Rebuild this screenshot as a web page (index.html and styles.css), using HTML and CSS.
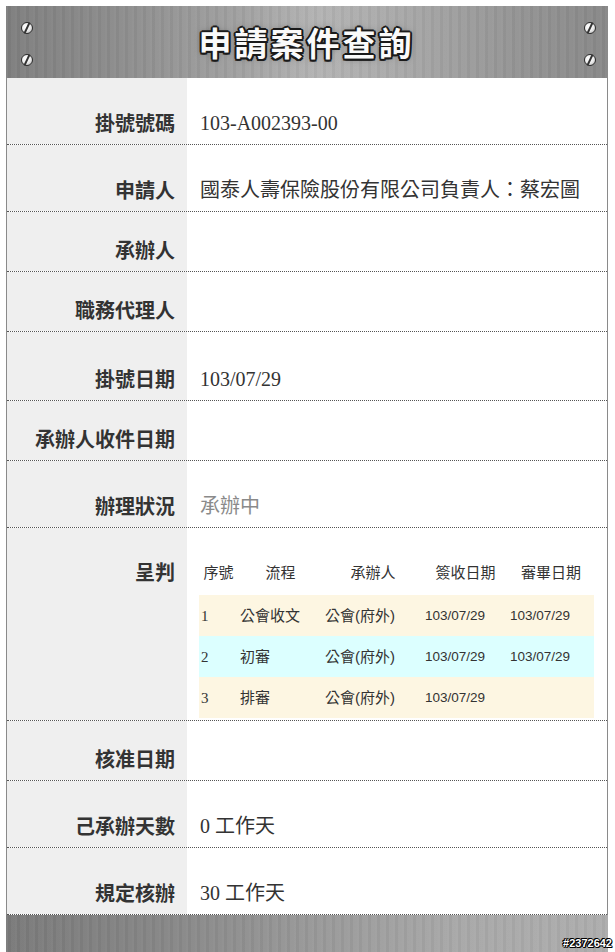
FILE: index.html
```html
<!DOCTYPE html>
<html lang="zh-Hant">
<head>
    <meta charset="UTF-8">
    <meta name="viewport" content="width=device-width, initial-scale=1.0">
    <title>申請案件查詢</title>
    <link rel="stylesheet" href="styles.css">
</head>
<body>
    <div class="panel">
        <div class="banner">
            <div class="screws"><span class="screw"></span><span class="screw"></span></div>
            <h1>申請案件查詢</h1>
            <div class="screws"><span class="screw"></span><span class="screw"></span></div>
        </div>

        <div class="rows">
            <div class="row">
                <div class="label">掛號號碼</div>
                <div class="value">103-A002393-00</div>
            </div>
            <div class="row">
                <div class="label">申請人</div>
                <div class="value">國泰人壽保險股份有限公司負責人：蔡宏圖</div>
            </div>
            <div class="row">
                <div class="label">承辦人</div>
                <div class="value"></div>
            </div>
            <div class="row">
                <div class="label">職務代理人</div>
                <div class="value"></div>
            </div>
            <div class="row">
                <div class="label">掛號日期</div>
                <div class="value value-date">103/07/29</div>
            </div>
            <div class="row">
                <div class="label">承辦人收件日期</div>
                <div class="value"></div>
            </div>
            <div class="row">
                <div class="label">辦理狀況</div>
                <div class="value muted">承辦中</div>
            </div>
            <div class="row row-top">
                <div class="label">呈判</div>
                <div class="value value-table">
                    <table class="flow">
                        <colgroup>
                            <col style="width:39px">
                            <col style="width:85px">
                            <col style="width:100px">
                            <col style="width:85px">
                            <col style="width:86px">
                        </colgroup>
                        <thead>
                            <tr><th>序號</th><th>流程</th><th>承辦人</th><th>簽收日期</th><th>審畢日期</th></tr>
                        </thead>
                        <tbody>
                            <tr class="odd"><td class="num">1</td><td>公會收文</td><td>公會(府外)</td><td class="date">103/07/29</td><td class="date">103/07/29</td></tr>
                            <tr class="even"><td class="num">2</td><td>初審</td><td>公會(府外)</td><td class="date">103/07/29</td><td class="date">103/07/29</td></tr>
                            <tr class="odd"><td class="num">3</td><td>排審</td><td>公會(府外)</td><td class="date">103/07/29</td><td class="date"></td></tr>
                        </tbody>
                    </table>
                </div>
            </div>
            <div class="row">
                <div class="label">核准日期</div>
                <div class="value"></div>
            </div>
            <div class="row">
                <div class="label">己承辦天數</div>
                <div class="value">0 工作天</div>
            </div>
            <div class="row">
                <div class="label">規定核辦</div>
                <div class="value">30 工作天</div>
            </div>
        </div>

        <div class="footer-bar"></div>
    </div>
    <div class="stamp">#2372642</div>
</body>
</html>
```

FILE: styles.css
```css
body {
    margin: 0;
    background-color: white;
    font-family: "Liberation Serif", "Noto Sans CJK TC", serif;
    color: #333;
    overflow: hidden;
}
.panel {
    width: 602px;
    margin: 6px 0 0 6px;
}
.banner {
    height: 72px;
    display: flex;
    align-items: center;
    justify-content: space-between;
    padding: 0 12px 0 15px;
    background:
        repeating-linear-gradient(90deg, rgba(255,255,255,0.035) 0 2px, rgba(0,0,0,0.03) 2px 5px, rgba(255,255,255,0.02) 5px 9px),
        linear-gradient(90deg, #7f7f7f 0%, #8c8c8c 18%, #a0a0a0 38%, #b3b3b3 52%, #a8a8a8 66%, #959595 84%, #888 100%);
}
.screws {
    display: flex;
    flex-direction: column;
    gap: 20px;
    padding-top: 4px;
}
.screw {
    position: relative;
    width: 12px;
    height: 12px;
    border-radius: 50%;
    box-sizing: border-box;
    border: 1px solid #2e2e2e;
    background: radial-gradient(circle at 40% 35%, #ffffff 0%, #eeeeee 50%, #a8a8a8 100%);
}
.screw::after {
    content: "";
    position: absolute;
    left: 4px;
    top: -1px;
    width: 2px;
    height: 12px;
    background: #333;
    transform: rotate(25deg);
}
.banner h1 {
    margin: 0;
    flex: 1;
    text-align: center;
    font-family: "Noto Sans CJK TC", sans-serif;
    font-size: 33px;
    font-weight: 700;
    letter-spacing: 3px;
    line-height: 1;
    color: #fafafa;
    padding-right: 4px;
    text-shadow:
        2px 0 0 #1a1a1a, -2px 0 0 #1a1a1a, 0 2px 0 #1a1a1a, 0 -2px 0 #1a1a1a,
        1.5px 1.5px 0 #1a1a1a, -1.5px 1.5px 0 #1a1a1a, 1.5px -1.5px 0 #1a1a1a, -1.5px -1.5px 0 #1a1a1a,
        0 0 6px #666;
}
.rows {
    border-left: 1px solid #8a8a8a;
    border-right: 1px solid #8a8a8a;
}
.row {
    display: grid;
    grid-template-columns: 180px 1fr;
    border-bottom: 1px dotted #555;
}
.label {
    background-color: #efefef;
    display: flex;
    align-items: flex-end;
    justify-content: flex-end;
    padding: 27px 12px 10px 0;
    min-height: 22px;
    font-family: "Noto Sans CJK TC", sans-serif;
    font-size: 20px;
    line-height: 22px;
    font-weight: 700;
    color: #333;
}
.value {
    display: flex;
    align-items: flex-end;
    padding: 0 13px 10px 13px;
    font-size: 20px;
    line-height: 22px;
    color: #333;
}
.value:not(:empty) {
    padding-top: 34px;
}
.value.value-date {
    padding-top: 36px;
}
.muted {
    color: #8a8a8a;
}
.row-top .label {
    align-items: flex-start;
    padding-top: 33px;
}
.value.value-table {
    padding: 29px 13px 2px 12px;
}
.flow {
    border-collapse: collapse;
    table-layout: fixed;
    width: 395px;
    font-family: "Liberation Sans", "Noto Sans CJK TC", sans-serif;
    font-size: 15px;
    color: #333;
}
.flow th {
    box-sizing: border-box;
    height: 38px;
    padding: 6px 0 0;
    line-height: 20px;
    vertical-align: top;
    font-weight: normal;
    text-align: center;
}
.flow td {
    box-sizing: border-box;
    height: 41px;
    padding: 0 0 0 2px;
    line-height: 20px;
    text-align: left;
    white-space: nowrap;
}
.flow .num {
    font-family: "Liberation Serif", serif;
}
.flow .date {
    font-size: 13.5px;
}
.flow .odd {
    background-color: #fdf6e2;
}
.flow .even {
    background-color: #dcffff;
}
.footer-bar {
    height: 46px;
    background:
        repeating-linear-gradient(90deg, rgba(255,255,255,0.035) 0 2px, rgba(0,0,0,0.03) 2px 5px, rgba(255,255,255,0.02) 5px 9px),
        linear-gradient(90deg, #7a7a7a 0%, #868686 25%, #989898 50%, #a8a8a8 75%, #adadad 100%);
}
.stamp {
    position: absolute;
    right: 3px;
    top: 937px;
    font-family: "Liberation Sans", sans-serif;
    font-size: 11px;
    font-weight: 700;
    color: white;
    text-shadow: 1px 0 0 #000, -1px 0 0 #000, 0 1px 0 #000, 0 -1px 0 #000, 1px 1px 0 #000, -1px -1px 0 #000;
}
```
